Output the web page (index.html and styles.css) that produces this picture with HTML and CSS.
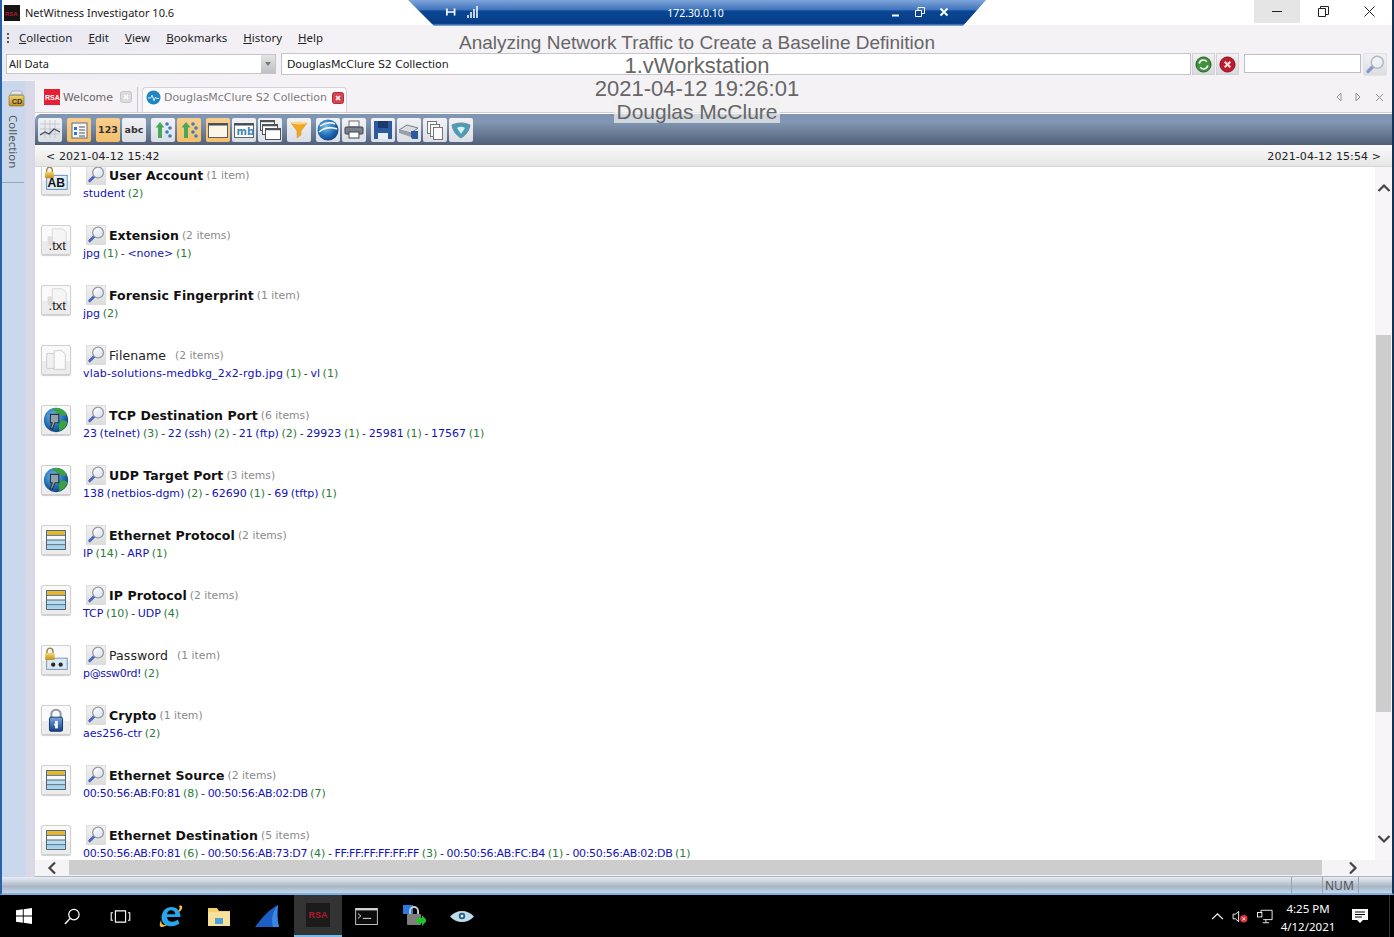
FILE: index.html
```html
<!DOCTYPE html>
<html lang="en">
<head>
<meta charset="utf-8">
<title>NetWitness Investigator 10.6</title>
<link rel="stylesheet" href="styles.css">
</head>
<body>
<svg class="defs" width="0" height="0" aria-hidden="true">
  <defs>
    <linearGradient id="lens" x1="0" y1="0" x2="1" y2="1"><stop offset="0" stop-color="#ffffff"/><stop offset="1" stop-color="#d5e1f0"/></linearGradient>
    <radialGradient id="globe" cx=".4" cy=".35" r=".7"><stop offset="0" stop-color="#7fc0e8"/><stop offset=".6" stop-color="#1f6fb8"/><stop offset="1" stop-color="#123c78"/></radialGradient>
    <linearGradient id="gold" x1="0" y1="0" x2="0" y2="1"><stop offset="0" stop-color="#f4d66a"/><stop offset="1" stop-color="#c08f22"/></linearGradient>
    <linearGradient id="lockblue" x1="0" y1="0" x2="0" y2="1"><stop offset="0" stop-color="#7aa6e0"/><stop offset="1" stop-color="#123f8a"/></linearGradient>
    <symbol id="i-search" viewBox="0 0 20 20">
      <path d="M8.500 11 3 16.500" stroke="#4a66c4" stroke-width="3.200" stroke-linecap="round" fill="none"/>
      <circle cx="12.300" cy="7.300" r="6" fill="url(#lens)" stroke="#96969e" stroke-width="1.400"/>
    </symbol>
    <symbol id="i-table" viewBox="0 0 30 30">
      <rect x="5" y="5" width="20" height="20" fill="#fff" stroke="#25475f" stroke-width="1"/>
      <rect x="5.500" y="5.500" width="19" height="4" fill="#efb51f"/>
      <rect x="5.500" y="11" width="19" height="4" fill="#f6f8f8"/>
      <rect x="5.500" y="15" width="19" height="4.500" fill="#b9dbee"/>
      <rect x="5.500" y="20.500" width="19" height="4" fill="#a8d2ea"/>
      <path d="M5 10h20M5 15h20M5 20h20" stroke="#3e6278" stroke-width="1"/>
    </symbol>
    <symbol id="i-txt" viewBox="0 0 30 30">
      <path d="M11 3h11l4 4v14H11z" fill="#f5f5f5" stroke="#d8d8d8"/>
      <path d="M6 11h5v10H6z" fill="#dedede"/>
      <text x="7" y="26" class="svg-txt">.txt</text>
    </symbol>
    <symbol id="i-files" viewBox="0 0 30 30">
      <path d="M5 8h11v16H5z" fill="#f0f0f0" stroke="#cbcbcb"/>
      <path d="M13 5h8l4 4v16H13z" fill="#fbfbfb" stroke="#cbcbcb"/>
    </symbol>
    <symbol id="i-globe" viewBox="0 0 30 30">
      <circle cx="15" cy="15" r="13" fill="url(#globe)"/>
      <path d="M11 3c5-2 12 0 15 5 1 3-3 3-6 1-3-1-6-3-9-6zM20 16c3-1 7 0 7 2-1 4-4 7-8 9-1-3-2-8 1-11z" fill="#39a43e"/>
      <path d="M9 9h9v9h-4l-3 7-2-1 2-6H9z" fill="#8fa3ad" stroke="#2c3438" stroke-width="1.200"/>
    </symbol>
    <symbol id="i-lock" viewBox="0 0 14 16">
      <path d="M3.500 8V5a3.500 3.500 0 0 1 7 0v3" fill="none" stroke="#9b8a55" stroke-width="1.800"/>
      <rect x="1.500" y="7" width="11" height="8" rx="1" fill="url(#gold)"/>
    </symbol>
    <symbol id="i-ab" viewBox="0 0 30 30">
      <rect x="5" y="10" width="22" height="15" fill="#dfeef9" stroke="#5d8db5"/>
      <use href="#i-lock" x="2" y="0" width="12" height="14"/>
      <text x="6" y="22.500" class="svg-ab">AB</text>
    </symbol>
    <symbol id="i-pass" viewBox="0 0 30 30">
      <rect x="5" y="13" width="22" height="12" fill="#dce9f4" stroke="#7294ad"/>
      <use href="#i-lock" x="2" y="1" width="13" height="15"/>
      <circle cx="12" cy="20" r="2.300" fill="#26292c"/><circle cx="20" cy="20" r="2.300" fill="#26292c"/>
    </symbol>
    <symbol id="i-crypto" viewBox="0 0 30 30">
      <path d="M10 13V9a5 5 0 0 1 10 0v4" fill="none" stroke="#8f99a5" stroke-width="2.200"/>
      <rect x="8" y="12" width="14" height="15" rx="1.500" fill="url(#lockblue)" stroke="#0d2e66"/>
      <rect x="14" y="16" width="3" height="8" fill="#f4f7fb"/><rect x="13" y="19" width="3" height="2" fill="#f4f7fb"/>
    </symbol>
    <symbol id="i-updown" viewBox="0 0 24 24">
      <path d="M9 4l4.500 5.500H11V20H7V9.500H4.500z" fill="#4aa857"/>
      <circle cx="16" cy="6" r="1.800" fill="#3b7dbd"/><circle cx="19" cy="10" r="1.800" fill="#3b7dbd"/><circle cx="16" cy="14" r="1.800" fill="#3b7dbd"/><circle cx="19" cy="18" r="1.800" fill="#3b7dbd"/>
    </symbol>
  </defs>
</svg>

<div class="window">
  <header class="titlebar">
    <svg class="app-logo" viewBox="0 0 16 16"><rect width="16" height="16" fill="#181414"/><text x="1" y="10.500" class="svg-rsa-mini">RSA</text></svg>
    <span class="app-name">NetWitness Investigator 10.6</span>
    <div class="win-btns">
      <span class="win-btn hover"><svg viewBox="0 0 11 11"><path d="M0 5.500h10" stroke="#222"/></svg></span>
      <span class="win-btn"><svg viewBox="0 0 11 11"><path d="M.5 2.500h7v8h-7zM2.500 2.500v-2h8v8h-3" fill="none" stroke="#222"/></svg></span>
      <span class="win-btn"><svg viewBox="0 0 11 11"><path d="M.5.500l10 10M10.500.500l-10 10" stroke="#222"/></svg></span>
    </div>
  </header>

  <nav class="menubar">
    <span class="grip"></span>
    <span class="menu"><u>C</u>ollection</span>
    <span class="menu"><u>E</u>dit</span>
    <span class="menu"><u>V</u>iew</span>
    <span class="menu"><u>B</u>ookmarks</span>
    <span class="menu"><u>H</u>istory</span>
    <span class="menu"><u>H</u>elp</span>
  </nav>

  <div class="addr">
    <div class="select"><span class="select-text">All Data</span><span class="select-btn"><svg viewBox="0 0 8 6"><path d="M1 1h6L4 5z" fill="#777"/></svg></span></div>
    <div class="collection-input">DouglasMcClure S2 Collection</div>
    <span class="go-btn"><svg viewBox="0 0 18 18"><circle cx="9" cy="9" r="8" fill="#3f8f3c" stroke="#1d5a22"/><path d="M4.500 8a4.500 4.500 0 0 1 8-2M13.500 10a4.500 4.500 0 0 1-8 2" fill="none" stroke="#e6f5e0" stroke-width="1.800"/></svg></span>
    <span class="go-btn"><svg viewBox="0 0 18 18"><circle cx="9" cy="9" r="8" fill="#c2182c" stroke="#7a1020"/><path d="M6 6l6 6M12 6l-6 6" stroke="#fbe3e3" stroke-width="2.200"/></svg></span>
    <div class="search-input"></div>
    <span class="search-go"><svg viewBox="0 0 20 20"><use href="#i-search"/></svg></span>
  </div>

  <div class="main">
    <aside class="rail">
      <svg class="rail-icon" viewBox="0 0 16 16"><path d="M4 1h8l2 3H2z" fill="#e9edf3" stroke="#8d95a5" stroke-width=".600"/><rect x="1" y="5" width="14" height="10" rx="1" fill="url(#gold)" stroke="#8a6a1b" stroke-width=".600"/><text x="3.500" y="13" class="svg-cd">CD</text></svg>
      <span class="rail-label">Collection</span>
      <span class="rail-rule"></span>
    </aside>

    <div class="panel">
      <div class="tabs">
        <div class="tab">
          <svg class="tab-icon" viewBox="0 0 16 16"><rect width="16" height="16" fill="#e51f35"/><text x="1" y="11" class="svg-rsa-tab">RSA</text></svg>
          <span class="tab-label">Welcome</span>
          <svg class="tab-close" viewBox="0 0 12 12"><rect x=".5" y=".500" width="11" height="11" rx="2" fill="#dcdcdc" stroke="#c6c6c6"/><path d="M4 4l4 4M8 4l-4 4" stroke="#fff" stroke-width="1.500"/></svg>
        </div>
        <div class="tab active">
          <svg class="tab-icon" viewBox="0 0 16 16"><circle cx="8" cy="8" r="7.500" fill="#1d86c4"/><path d="M2 8.500h3l1.500-3 2 6 1.500-4 1 1.500h3" fill="none" stroke="#e6f6fd" stroke-width="1"/></svg>
          <span class="tab-label">DouglasMcClure S2 Collection</span>
          <svg class="tab-close" viewBox="0 0 12 12"><rect x=".5" y=".500" width="11" height="11" rx="2" fill="#d8424f" stroke="#b52c38"/><path d="M4 4l4 4M8 4l-4 4" stroke="#fff" stroke-width="1.500"/></svg>
        </div>
        <div class="tab-nav">
          <svg viewBox="0 0 8 10"><path d="M6 1 2 5l4 4z" fill="none" stroke="#999"/></svg>
          <svg viewBox="0 0 8 10"><path d="M2 1l4 4-4 4z" fill="none" stroke="#999"/></svg>
          <svg viewBox="0 0 10 10"><path d="M1 1l8 8M9 1 1 9" stroke="#888"/></svg>
        </div>
      </div>

      <div class="toolbar">
        <span class="tool"><svg viewBox="0 0 24 24"><path d="M2 6h20M2 11h20M2 16h20M7 2v18M12 2v18M17 2v18" stroke="#b5bcc7" stroke-width=".700"/><path d="M2 17l5-3 4 2 5-5 6 3" fill="none" stroke="#454c57" stroke-width="1.300"/></svg></span>
        <span class="tool on gap"><svg viewBox="0 0 24 24"><rect x="5" y="5" width="15" height="15" fill="#f8f8f8" stroke="#5f6a78"/><path d="M7 9h3v3H7zM7 14h3v3H7z" fill="#2e78d2"/><path d="M12 9h6M12 12h6M12 15h6M12 18h6" stroke="#4a5561"/></svg></span>
        <span class="tool on gap tool-num">123</span>
        <span class="tool tool-num">abc</span>
        <span class="tool gap"><svg viewBox="0 0 24 24"><use href="#i-updown"/></svg></span>
        <span class="tool on"><svg viewBox="0 0 24 24"><use href="#i-updown"/></svg></span>
        <span class="tool on gap"><svg viewBox="0 0 24 24"><rect x="2.500" y="5.500" width="19" height="14" fill="#fbf6e8" stroke="#565d66"/><path d="M2.500 6.500h19" stroke="#434a54" stroke-width="2"/></svg></span>
        <span class="tool"><svg viewBox="0 0 24 24"><rect x="2.500" y="5.500" width="19" height="14" fill="#fdfdfd" stroke="#5b6670"/><path d="M2.500 6.500h19" stroke="#434a54" stroke-width="2"/><text x="4.500" y="16.500" class="svg-mb">mb</text></svg></span>
        <span class="tool"><svg viewBox="0 0 24 24"><rect x="2.500" y="2.500" width="14" height="10" fill="#fff" stroke="#4c535c"/><rect x="4.500" y="6.500" width="15" height="10" fill="#fff" stroke="#4c535c"/><rect x="7.500" y="10.500" width="15" height="11" fill="#fff" stroke="#4c535c"/><path d="M2.500 3.500h14M4.500 7.500h15M7.500 11.500h15" stroke="#4c535c" stroke-width="1.500"/></svg></span>
        <span class="tool gap"><svg viewBox="0 0 24 24"><path d="M4 5h16l-6 8v4l-4 3v-7z" fill="#f2a71e" stroke="#d4933a" stroke-width=".600"/><ellipse cx="12" cy="5" rx="8" ry="1.500" fill="#fbd88a"/></svg></span>
        <span class="tool gap"><svg viewBox="0 0 24 24"><circle cx="12" cy="12" r="10.500" fill="url(#globe)"/><path d="M3 14c6-5 12-5 18-3M4 8c5-3 11-4 15-2" fill="none" stroke="#fff" stroke-width="1.400"/></svg></span>
        <span class="tool"><svg viewBox="0 0 24 24"><rect x="7" y="3" width="10" height="6" fill="#f6f6f6" stroke="#6b6f75"/><rect x="3" y="9" width="18" height="7" rx="1" fill="#7b818a" stroke="#3f444b"/><rect x="7" y="14" width="10" height="6" fill="#fff" stroke="#3f444b"/></svg></span>
        <span class="tool gap"><svg viewBox="0 0 24 24"><path d="M3 3h18v18H3z" fill="#2c5a9c"/><path d="M7 3h10v7H7z" fill="#1b3a6d"/><path d="M7 15h10v6H7z" fill="#e8eef6"/></svg></span>
        <span class="tool"><svg viewBox="0 0 24 24"><path d="M2 12l8-5 11 3-7 5z" fill="#d9dde2" stroke="#777d85"/><path d="M2 12v3l12 4v-4z" fill="#99a0a9"/><path d="M14 19v-6h7v8h-6z" fill="#2c5a9c"/></svg></span>
        <span class="tool"><svg viewBox="0 0 24 24"><rect x="4.500" y="3.500" width="9" height="12" fill="#fafafa" stroke="#777"/><rect x="7.500" y="6.500" width="9" height="12" fill="#fafafa" stroke="#777"/><rect x="10.500" y="9.500" width="9" height="12" fill="#fafafa" stroke="#777"/></svg></span>
        <span class="tool"><svg viewBox="0 0 24 24"><path d="M12 5c4 0 7 1 9 2-1 6-4 10-9 13C7 17 4 13 3 7c2-1 5-2 9-2z" fill="#4a9db8" stroke="#7a8a98"/><path d="M8 10c3-2 6-1 8 0l-4 6z" fill="#d6f0e6"/></svg></span>
      </div>

      <div class="timebar"><span>&lt; 2021-04-12 15:42</span><span>2021-04-12 15:54 &gt;</span></div>

      <div class="body">
        <div class="list">
          <section class="row">
            <svg class="kind" viewBox="0 0 30 30"><use href="#i-ab"/></svg>
            <div class="info">
              <div class="head"><span class="find"><svg viewBox="0 0 20 20"><use href="#i-search"/></svg></span><h2 class="name">User Account</h2><span class="items">(1 item)</span></div>
              <p class="vals"><a class="v">student</a> <span class="c">(2)</span></p>
            </div>
          </section>
          <section class="row">
            <svg class="kind" viewBox="0 0 30 30"><use href="#i-txt"/></svg>
            <div class="info">
              <div class="head"><span class="find"><svg viewBox="0 0 20 20"><use href="#i-search"/></svg></span><h2 class="name">Extension</h2><span class="items">(2 items)</span></div>
              <p class="vals"><a class="v">jpg</a> <span class="c">(1)</span> - <a class="v">&lt;none&gt;</a> <span class="c">(1)</span></p>
            </div>
          </section>
          <section class="row">
            <svg class="kind" viewBox="0 0 30 30"><use href="#i-txt"/></svg>
            <div class="info">
              <div class="head"><span class="find"><svg viewBox="0 0 20 20"><use href="#i-search"/></svg></span><h2 class="name">Forensic Fingerprint</h2><span class="items">(1 item)</span></div>
              <p class="vals"><a class="v">jpg</a> <span class="c">(2)</span></p>
            </div>
          </section>
          <section class="row">
            <svg class="kind" viewBox="0 0 30 30"><use href="#i-files"/></svg>
            <div class="info">
              <div class="head"><span class="find"><svg viewBox="0 0 20 20"><use href="#i-search"/></svg></span><h2 class="name plain">Filename</h2><span class="items">(2 items)</span></div>
              <p class="vals"><a class="v wide">vlab-solutions-medbkg_2x2-rgb.jpg</a> <span class="c">(1)</span> - <a class="v">vl</a> <span class="c">(1)</span></p>
            </div>
          </section>
          <section class="row">
            <svg class="kind" viewBox="0 0 30 30"><use href="#i-globe"/></svg>
            <div class="info">
              <div class="head"><span class="find"><svg viewBox="0 0 20 20"><use href="#i-search"/></svg></span><h2 class="name">TCP Destination Port</h2><span class="items">(6 items)</span></div>
              <p class="vals"><a class="v">23 (telnet)</a> <span class="c">(3)</span> - <a class="v">22 (ssh)</a> <span class="c">(2)</span> - <a class="v">21 (ftp)</a> <span class="c">(2)</span> - <a class="v">29923</a> <span class="c">(1)</span> - <a class="v">25981</a> <span class="c">(1)</span> - <a class="v">17567</a> <span class="c">(1)</span></p>
            </div>
          </section>
          <section class="row">
            <svg class="kind" viewBox="0 0 30 30"><use href="#i-globe"/></svg>
            <div class="info">
              <div class="head"><span class="find"><svg viewBox="0 0 20 20"><use href="#i-search"/></svg></span><h2 class="name">UDP Target Port</h2><span class="items">(3 items)</span></div>
              <p class="vals"><a class="v">138 (netbios-dgm)</a> <span class="c">(2)</span> - <a class="v">62690</a> <span class="c">(1)</span> - <a class="v">69 (tftp)</a> <span class="c">(1)</span></p>
            </div>
          </section>
          <section class="row">
            <svg class="kind" viewBox="0 0 30 30"><use href="#i-table"/></svg>
            <div class="info">
              <div class="head"><span class="find"><svg viewBox="0 0 20 20"><use href="#i-search"/></svg></span><h2 class="name">Ethernet Protocol</h2><span class="items">(2 items)</span></div>
              <p class="vals"><a class="v">IP</a> <span class="c">(14)</span> - <a class="v">ARP</a> <span class="c">(1)</span></p>
            </div>
          </section>
          <section class="row">
            <svg class="kind" viewBox="0 0 30 30"><use href="#i-table"/></svg>
            <div class="info">
              <div class="head"><span class="find"><svg viewBox="0 0 20 20"><use href="#i-search"/></svg></span><h2 class="name">IP Protocol</h2><span class="items">(2 items)</span></div>
              <p class="vals"><a class="v">TCP</a> <span class="c">(10)</span> - <a class="v">UDP</a> <span class="c">(4)</span></p>
            </div>
          </section>
          <section class="row">
            <svg class="kind" viewBox="0 0 30 30"><use href="#i-pass"/></svg>
            <div class="info">
              <div class="head"><span class="find"><svg viewBox="0 0 20 20"><use href="#i-search"/></svg></span><h2 class="name plain">Password</h2><span class="items">(1 item)</span></div>
              <p class="vals"><a class="v mac">p@ssw0rd!</a> <span class="c">(2)</span></p>
            </div>
          </section>
          <section class="row">
            <svg class="kind" viewBox="0 0 30 30"><use href="#i-crypto"/></svg>
            <div class="info">
              <div class="head"><span class="find"><svg viewBox="0 0 20 20"><use href="#i-search"/></svg></span><h2 class="name">Crypto</h2><span class="items">(1 item)</span></div>
              <p class="vals"><a class="v">aes256-ctr</a> <span class="c">(2)</span></p>
            </div>
          </section>
          <section class="row">
            <svg class="kind" viewBox="0 0 30 30"><use href="#i-table"/></svg>
            <div class="info">
              <div class="head"><span class="find"><svg viewBox="0 0 20 20"><use href="#i-search"/></svg></span><h2 class="name">Ethernet Source</h2><span class="items">(2 items)</span></div>
              <p class="vals"><a class="v mac">00:50:56:AB:F0:81</a> <span class="c">(8)</span> - <a class="v mac">00:50:56:AB:02:DB</a> <span class="c">(7)</span></p>
            </div>
          </section>
          <section class="row">
            <svg class="kind" viewBox="0 0 30 30"><use href="#i-table"/></svg>
            <div class="info">
              <div class="head"><span class="find"><svg viewBox="0 0 20 20"><use href="#i-search"/></svg></span><h2 class="name">Ethernet Destination</h2><span class="items">(5 items)</span></div>
              <p class="vals"><a class="v mac">00:50:56:AB:F0:81</a> <span class="c">(6)</span> - <a class="v mac">00:50:56:AB:73:D7</a> <span class="c">(4)</span> - <a class="v mac">FF:FF:FF:FF:FF:FF</a> <span class="c">(3)</span> - <a class="v mac">00:50:56:AB:FC:B4</a> <span class="c">(1)</span> - <a class="v mac">00:50:56:AB:02:DB</a> <span class="c">(1)</span></p>
            </div>
          </section>
        </div>
        <div class="vscroll">
          <svg class="arrow-up" viewBox="0 0 14 10"><path d="M1.500 8 7 2.500 12.500 8" fill="none" stroke="#444" stroke-width="2.200"/></svg>
          <div class="vthumb"></div>
          <svg class="arrow-down" viewBox="0 0 14 10"><path d="M1.500 2 7 7.500 12.500 2" fill="none" stroke="#444" stroke-width="2.200"/></svg>
        </div>
      </div>

      <div class="hscroll">
        <span class="hcap"><svg viewBox="0 0 10 14"><path d="M8 1.500 2.500 7 8 12.500" fill="none" stroke="#444" stroke-width="2.200"/></svg></span>
        <div class="hthumb"></div>
        <span class="hcap end"><svg viewBox="0 0 10 14"><path d="M2 1.500 7.500 7 2 12.500" fill="none" stroke="#444" stroke-width="2.200"/></svg></span>
      </div>
    </div>
  </div>

  <footer class="status">
    <span class="cell"></span>
    <span class="cell num">NUM</span>
    <span class="cell tail"></span>
  </footer>
</div>

<div class="taskbar">
  <span class="task"><svg class="t-win" viewBox="0 0 16 16"><path d="M0 2.300 6.800 1.300v6.300H0zM7.700 1.200 16 0v7.600H7.700zM0 8.400h6.800v6.300L0 13.700zM7.700 8.400H16V16l-8.300-1.200z" fill="#fff"/></svg></span>
  <span class="task"><svg class="t-mid" viewBox="0 0 18 18"><circle cx="10.500" cy="7" r="5.500" fill="none" stroke="#fff" stroke-width="1.300"/><path d="M6.500 11 1 17" stroke="#fff" stroke-width="1.500"/></svg></span>
  <span class="task"><svg class="t-view" viewBox="0 0 22 14"><path d="M5.500 1h11v12h-11zM3 3H1v8h2M19 3h2v8h-2" fill="none" stroke="#fff" stroke-width="1.200"/></svg></span>
  <span class="task shifted"><svg class="t-big" viewBox="0 0 24 24"><path d="M2.500 13.500C3 7 7 3 12.500 3 18 3 21.500 7 21.500 13H8c.3 3 2 4.800 5 4.800 2.500 0 4.300-1 5.500-2.300l2 3.800c-2 2-4.800 3-8 3C6.500 22.300 2.500 18.800 2.500 13.500zM8 10.200h8.300C16 7.800 14.500 6.300 12.200 6.300 9.900 6.300 8.400 7.800 8 10.200z" fill="#2aa4ea"/><path d="M20 2c2.500-1 3.800 0 3 2.500-1 2.800-3 3.500-4 3 .8-.8 2.500-3 1-5.500z M2 16c-1.500 4-2 6.500.5 7 1.800.3 4-1 6-2.500-2.500.6-5 1-6-1.500z" fill="#f3c23b"/></svg></span>
  <span class="task"><svg class="t-big" viewBox="0 0 24 24"><path d="M1 4h9l2 3h11v15H1z" fill="#f3cf6e"/><path d="M1 8h22v14H1z" fill="#f7e09a"/><rect x="8" y="14" width="8" height="6" fill="#4ca0dd"/></svg></span>
  <span class="task"><svg class="t-big" viewBox="0 0 24 24"><path d="M0 23C6 15 13 6 23 1c-1 7-1 15 1 22z" fill="#1b5fc4"/><path d="M23 1c-1 7-1 15 1 22h-6c-2-7-1-15 5-22z" fill="#3a86e4"/></svg></span>
  <span class="task current"><span class="rsa-tile">RSA</span></span>
  <span class="task"><svg class="t-term" viewBox="0 0 24 18"><rect x=".500" y=".500" width="23" height="17" fill="#0c0c0c" stroke="#c8c8c8"/><path d="M.500 1.500h23" stroke="#d8d8d8" stroke-width="2"/><path d="M3 6l3 2.500L3 11M8 11h9" stroke="#e8e8e8" fill="none"/></svg></span>
  <span class="task"><svg class="t-big" viewBox="0 0 24 24"><rect x="1" y="1" width="10" height="9" fill="#2a7be2"/><path d="M8 11V7a4 4 0 0 1 8 0v4" fill="none" stroke="#c9c9c9" stroke-width="2"/><rect x="5" y="10" width="14" height="11" rx="1" fill="#7e7e7e"/><path d="M14 14l6 0v-3l5 5.500-5 5.500v-3h-6z" fill="#22c32a"/></svg></span>
  <span class="task"><svg class="t-eye" viewBox="0 0 26 14"><path d="M0 7c4-4 8-6 13-6s9 2 13 6c-4 4-8 6-13 6S4 11 0 7z" fill="#bfdcea"/><circle cx="13" cy="6.500" r="3.500" fill="#2c5f86"/><circle cx="13" cy="6.500" r="1.500" fill="#e8f4fa"/></svg></span>
  <div class="tray">
    <svg class="tray-i" viewBox="0 0 14 10"><path d="M1 8l6-6 6 6" fill="none" stroke="#fff" stroke-width="1.300"/></svg>
    <svg class="tray-s" viewBox="0 0 18 14"><path d="M1 4.500h2.500L7 1.500v11L3.500 9.500H1z" fill="none" stroke="#fff"/><circle cx="12.500" cy="9.500" r="4" fill="#e2313b"/><path d="M11 8l3 3M14 8l-3 3" stroke="#fff"/></svg>
    <svg class="tray-n" viewBox="0 0 18 16"><path d="M4.500 3.500V1h12.500v10.500H7M10 11.500v3M6.500 15h7" fill="none" stroke="#fff"/><rect x=".500" y="3.500" width="5" height="5" fill="none" stroke="#fff"/></svg>
    <div class="clock"><span>4:25 PM</span><span>4/12/2021</span></div>
    <svg class="tray-a" viewBox="0 0 16 15"><path d="M0 0h16v11h-5l-3 3-3-3H0z" fill="#fff"/><path d="M3 3h10M3 5.500h10M3 8h7" stroke="#000"/></svg>
    <span class="show-desk"></span>
  </div>
</div>

<div class="rdp">
  <div class="rdp-left">
    <svg class="rdp-pin" viewBox="0 0 14 11"><path d="M1 5.500h10M1 1.500v8M10 1.500v8" stroke="#fff" stroke-width="2" fill="none"/></svg>
    <svg class="rdp-sig" viewBox="0 0 12 12"><path d="M1 9v3M4 6v6M7 3v9M10 0v12" stroke="#fff" stroke-width="1.500"/></svg>
  </div>
  <span class="rdp-ip">172.30.0.10</span>
  <div class="rdp-right">
    <svg viewBox="0 0 10 10"><path d="M1 8.500h7" stroke="#fff" stroke-width="2"/></svg>
    <svg viewBox="0 0 10 10"><path d="M.5 3.500h6v6h-6zM3 3.500v-3h6.500v6h-3" fill="none" stroke="#fff"/></svg>
    <svg viewBox="0 0 10 10"><path d="M1.500 1.500l7 7M8.500 1.500l-7 7" stroke="#fff" stroke-width="2"/></svg>
  </div>
</div>

<div class="watermark">
  <span class="wm-a">Analyzing Network Traffic to Create a Baseline Definition</span>
  <span class="wm-b">1.vWorkstation</span>
  <span class="wm-b">2021-04-12 19:26:01</span>
  <span class="wm-b wm-last">Douglas McClure</span>
</div>
</body>
</html>
```

FILE: styles.css
```css
* { box-sizing: border-box; }
html, body { margin: 0; height: 100%; }
body { width: 1394px; height: 937px; overflow: hidden; position: relative; display: flex; flex-direction: column; background: #000; font-family: "DejaVu Sans", sans-serif; }
.defs { position: absolute; }
svg { display: block; flex: none; }

.svg-txt { font: 14px "Liberation Sans", sans-serif; fill: #222; }
.svg-ab { font: bold 13px "Liberation Sans", sans-serif; fill: #111; }
.svg-rsa-mini { font: bold 6px "Liberation Sans", sans-serif; fill: #b01c2e; }
.svg-rsa-tab { font: bold 7px "Liberation Sans", sans-serif; fill: #fff; }
.svg-cd { font: bold 7px "Liberation Sans", sans-serif; fill: #333; }
.svg-mb { font: bold 10px "DejaVu Sans", sans-serif; fill: #3f87b8; }

.window { flex: 0 0 895px; display: flex; flex-direction: column; height: 895px; background: #f5f2f6; border-left: 2px solid #2a62a8; border-right: 2px solid #123256; border-bottom: 2px solid #7fb2e4; }

.titlebar { flex: 0 0 25px; display: flex; align-items: center; background: #fff; padding-left: 2px; }
.app-logo { width: 16px; height: 16px; }
.app-name { margin-left: 5px; font: 11px "Noto Sans", sans-serif; color: #1a1a1a; }
.win-btns { margin-left: auto; display: flex; height: 23px; align-self: flex-start; }
.win-btn { width: 46px; display: flex; align-items: center; justify-content: center; }
.win-btn.hover { background: #e5e5e5; }
.win-btn svg { width: 11px; height: 11px; }

.menubar { flex: 0 0 25px; display: flex; align-items: center; gap: 16px; padding-left: 5px; background: linear-gradient(90deg, #e8e8f1, #f5f2f6 300px); font: 11.500px "Noto Sans", sans-serif; color: #222; }
.grip { width: 2px; height: 10px; margin-right: -6px; background: repeating-linear-gradient(#555 0 2px, transparent 2px 4px); }
.menu { white-space: nowrap; }

.addr { flex: 0 0 30px; display: flex; align-items: flex-start; padding: 3px 0 0 4px; background: linear-gradient(90deg, #ececf3, #f5f2f6 300px); font: 11px "DejaVu Sans", sans-serif; color: #222; }
.select { width: 270px; height: 20px; margin-top: 1px; display: flex; background: #fff; border: 1px solid #c4c6cc; }
.select-text { flex: 1; padding-left: 2px; line-height: 18px; font-family: "Noto Sans", sans-serif; }
.select-btn { width: 14px; background: linear-gradient(#e4e4e6, #bfc0c4); display: flex; align-items: center; justify-content: center; }
.select-btn svg { width: 8px; height: 6px; }
.collection-input { width: 910px; height: 22px; margin-left: 5px; padding-left: 5px; line-height: 21px; background: #fff; border: 1px solid #c4c6cc; letter-spacing: -.1px; }
.go-btn { width: 23px; height: 22px; margin-left: 1px; display: flex; align-items: center; justify-content: center; background: linear-gradient(#f1f1f3, #d9d9dd); border: 1px solid #d2d2d6; }
.go-btn svg { width: 17px; height: 17px; }
.search-input { width: 117px; height: 19px; margin: 1px 0 0 5px; background: #fff; border: 1px solid #bcbec4; }
.search-go { width: 24px; height: 23px; margin-left: 2px; display: flex; align-items: center; justify-content: center; background: linear-gradient(#f0f0f2, #d2d2d6); border: 1px solid #dadade; border-radius: 2px; opacity: .65; }
.search-go svg { width: 20px; height: 20px; }

.main { flex: 1; display: flex; min-height: 0; }
.rail { width: 33px; position: relative; display: flex; flex-direction: column; background: linear-gradient(90deg, #cad8ee 0 23px, #d8d8e6 24px); padding-top: 9px; border-top: 1px solid #f5f2f6; }
.rail-icon { width: 17px; height: 17px; margin-left: 6px; }
.rail-label { align-self: flex-start; margin: 8px 0 0 4px; writing-mode: vertical-rl; font: 11.500px "Noto Sans", sans-serif; color: #555; line-height: 14px; }
.rail-rule { width: 22px; height: 1px; margin-top: 14px; background: #9aa5b8; }

.panel { flex: 1; min-width: 0; display: flex; flex-direction: column; background: #fff; }

.tabs { flex: 0 0 33px; display: flex; align-items: flex-end; gap: 4px; padding-left: 7px; background: #f5f2f6; border-bottom: 1px solid #cfcfd3; }
.tab { height: 25px; display: flex; align-items: center; padding: 0 5px 5px 2px; border-right: 1px solid #c9c9cf; font: 11px "DejaVu Sans", sans-serif; color: #666; }
.tab.active { width: 205px; border: 1px solid #d2d2d8; border-bottom: 0; border-radius: 4px 4px 0 0; padding: 0 2px 5px 3px; background: #fbf9fc; color: #7c7c7c; }
.tab:first-child { width: 96px; }
.tab-icon { width: 16px; height: 16px; }
.tab.active .tab-icon { width: 15px; height: 15px; }
.tab-label { margin-left: 3px; white-space: nowrap; letter-spacing: -.05px; }
.tab-close { width: 12px; height: 12px; margin-left: auto; }
.tab-nav { margin-left: auto; display: flex; align-items: center; gap: 11px; padding: 0 8px 10px 0; }
.tab-nav svg { width: 8px; height: 10px; }
.tab-nav svg:last-child { width: 9px; height: 9px; margin-left: 2px; }

.toolbar { flex: 0 0 31px; display: flex; align-items: center; gap: 2px; padding-left: 3px; background: linear-gradient(#7f94b0, #8197b3 25%, #535f78); border-radius: 6px 0 0 0; margin-top: 1px; }
.tool { width: 24px; height: 24px; display: flex; align-items: center; justify-content: center; background: linear-gradient(#f1f2f5, #dadee5); border-radius: 2px; }
.tool.on { background: linear-gradient(#f9cf8e, #f4bf6c); }
.tool.gap { margin-left: 3px; }
.tool svg { width: 24px; height: 24px; }
.tool-num { font: bold 9.500px "DejaVu Sans", sans-serif; color: #333; }

.timebar { flex: 0 0 22px; display: flex; justify-content: space-between; align-items: center; padding: 1px 11px 0; background: linear-gradient(#fafafa, #e6e6e6); border-bottom: 1px solid #d6d6d6; font: 11px "DejaVu Sans", sans-serif; color: #222; letter-spacing: .1px; }

.body { flex: 1; min-height: 0; display: flex; }
.list { flex: 1; min-width: 0; height: 100%; overflow: hidden; background: #fff; }
.row { height: 60px; display: flex; align-items: flex-start; padding-left: 6px; }
.row:first-child { margin-top: -2px; }
.kind { width: 30px; height: 30px; background: linear-gradient(#fafafa 55%, #ececec 55%); border: 1px solid #cfcfcf; border-radius: 2px; box-shadow: 0 1px 1px #ccc; }
.info { margin-left: 12px; min-width: 0; }
.head { height: 20px; display: flex; align-items: center; padding-left: 3px; }
.find { width: 20px; height: 20px; flex: none; background: linear-gradient(#f2f2f2, #dcdcdc); border: 1px solid #ddd; }
.find svg { width: 18px; height: 18px; }
.name { margin: 0 0 0 3px; font: bold 12.500px "DejaVu Sans", sans-serif; color: #111; white-space: nowrap; letter-spacing: .08px; }
.name.plain { font-weight: 400; color: #222; margin-right: 6px; }
.items { margin: 1px 0 0 3px; font-size: 10.800px; color: #8a8a8a; white-space: nowrap; }
.vals { margin: 1px 0 0; height: 16px; line-height: 16px; font-size: 11px; color: #333; white-space: nowrap; word-spacing: -.9px; }
.v { color: #1212b8; }
.v.wide { letter-spacing: .18px; }
.v.mac { letter-spacing: -.33px; }
.c { color: #2a7a35; }

.vscroll { width: 17px; flex: none; display: flex; flex-direction: column; align-items: center; background: #f7f5f7; }
.arrow-up { width: 14px; height: 10px; margin-top: 16px; }
.vthumb { width: 15px; height: 377px; margin-top: 142px; flex: none; background: #cdcdcd; }
.arrow-down { width: 14px; height: 10px; margin-top: auto; margin-bottom: 16px; }

.hscroll { flex: 0 0 17px; display: flex; background: #f5f3f6; border-bottom: 1px solid #aeb4bd; }
.hcap { width: 34px; flex: none; display: flex; align-items: center; justify-content: center; }
.hcap svg { width: 10px; height: 14px; }
.hcap.end { width: 70px; padding-right: 8px; }
.hthumb { flex: 1; height: 15px; background: #cdcdcd; }

.status { flex: 0 0 16px; min-height: 0; overflow: hidden; display: flex; justify-content: flex-end; background: linear-gradient(#e9edf3, #a9b5c5 60%, #c5d6ea); }
.cell { border-left: 1px solid #9aa2ad; width: 31px; }
.cell.num { width: 36px; padding-left: 2px; font: 12px "Noto Sans", sans-serif; line-height: 18px; color: #555; }
.cell.tail { width: 34px; }

.taskbar { flex: 1; display: flex; background: #000; }
.task { width: 48px; height: 42px; flex: none; display: flex; align-items: center; justify-content: center; }
.task.shifted { margin-left: 3px; }
.task.current { background: #333; border-bottom: 2px solid #76b9ed; margin-left: 3px; }
.t-win { width: 16px; height: 16px; }
.t-mid { width: 17px; height: 17px; }
.t-view { width: 21px; height: 13px; }
.t-big { width: 24px; height: 24px; }
.t-term { width: 23px; height: 17px; }
.t-eye { width: 24px; height: 13px; }
.rsa-tile { width: 24px; height: 24px; background: #1b1b1b; color: #b3182c; font: bold 9px/24px "Liberation Sans", sans-serif; text-align: center; }
.tray { margin-left: auto; display: flex; align-items: center; color: #fff; }
.tray-i { width: 13px; height: 9px; margin-right: 8px; }
.tray-s { width: 17px; height: 13px; margin-right: 8px; }
.tray-n { width: 16px; height: 15px; margin-right: 4px; }
.clock { width: 62px; display: flex; flex-direction: column; align-items: center; gap: 3px; padding-top: 3px; font: 11.500px "Noto Sans", sans-serif; }
.tray-a { width: 16px; height: 15px; margin: 0 21px 0 13px; }
.show-desk { width: 1px; height: 42px; background: #333; margin-right: 4px; }

.rdp { position: absolute; top: 0; left: 408px; width: 578px; height: 26px; display: flex; align-items: center; justify-content: center; clip-path: polygon(0 0, 100% 0, 96% 100%, 4.500% 100%); background: linear-gradient(#7ea5da 0, #3f74bb 38%, #0a4794 42%, #063c86 90%, #8fb5e0 100%); color: #fff; font: 10.500px "Noto Sans", sans-serif; }
.rdp-left { position: absolute; left: 38px; top: 6px; display: flex; gap: 9px; align-items: center; }
.rdp-pin { width: 12px; height: 10px; }
.rdp-sig { width: 12px; height: 12px; }
.rdp-right { position: absolute; right: 37px; top: 7px; display: flex; gap: 14px; }
.rdp-right svg { width: 10px; height: 10px; }
.rdp-ip { margin-left: -3px; }

.watermark { position: absolute; top: 31px; left: 297px; width: 800px; display: flex; flex-direction: column; align-items: center; font-family: "Liberation Sans", sans-serif; color: #666; }
.wm-a { height: 23px; line-height: 23px; font-size: 19px; }
.wm-b { height: 23px; line-height: 23px; font-size: 22px; padding: 0 2px; }
.wm-last { font-size: 21px; background: rgba(240, 240, 240, .72); }
```
